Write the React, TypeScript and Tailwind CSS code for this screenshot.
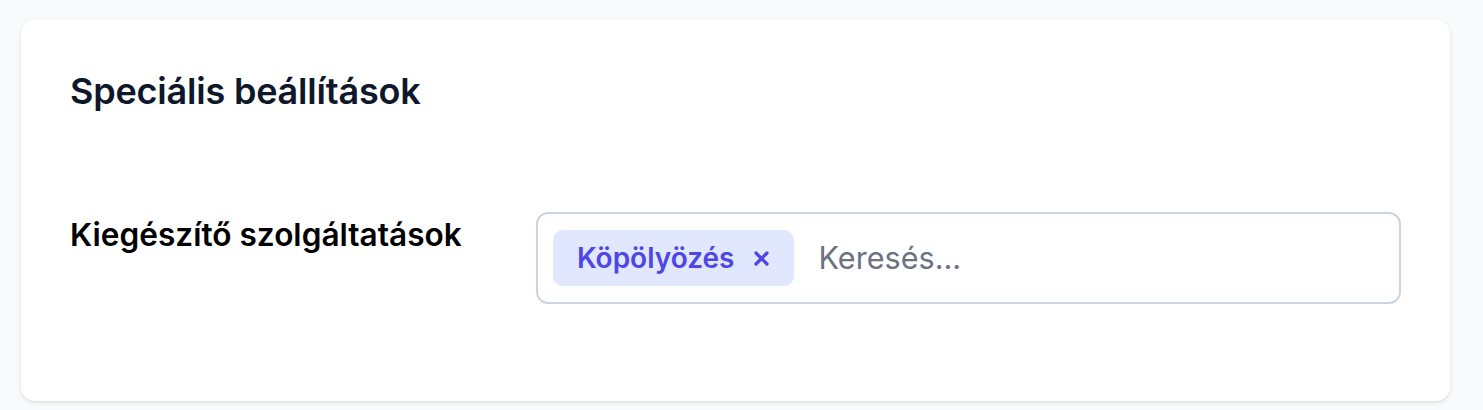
import React, { useState } from "react";

// Special settings card with a tag-style multi select
export default function App() {
  const [tags, setTags] = useState<string[]>(["Köpölyözés"]);
  const [query, setQuery] = useState("");

  return (
    <div
      className="min-h-screen bg-[#f8fafc] pt-[20px] pl-[21px]"
      style={{ fontFamily: "Inter, 'Noto Sans', sans-serif" }}
    >
      <div className="w-[1429px] rounded-[14px] bg-white px-[49px] pt-[49px] pb-[97px] shadow-[0_2px_5px_rgba(15,23,42,0.08),0_1px_2px_rgba(15,23,42,0.06)]">
        {/* Title */}
        <h2 className="text-[36px] leading-[44px] font-semibold tracking-[-0.2px] text-[#0f172a]">
          Speciális beállítások
        </h2>

        {/* Extra services row */}
        <div className="mt-[99px] flex items-start">
          <label className="mt-[3px] w-[466px] shrink-0 text-[31.6px] leading-[40px] font-semibold text-black">
            Kiegészítő szolgáltatások
          </label>

          <div className="flex w-[866px] items-center rounded-[12px] border-2 border-[#cbd5e1] px-[15px] py-[16px]">
            {tags.map((tag) => (
              <span
                key={tag}
                className="flex h-[56px] items-center rounded-[10px] bg-[#e0e7ff] pl-[24px] pr-[25px] text-[28px] font-semibold text-[#4f46e5]"
              >
                {tag}
                <button
                  type="button"
                  aria-label="Eltávolítás"
                  onClick={() => setTags(tags.filter((t) => t !== tag))}
                  className="ml-[19px] flex items-center"
                >
                  <svg width="15" height="15" viewBox="0 0 15 15">
                    <path
                      d="M2 2 L13 13 M13 2 L2 13"
                      stroke="#4f46e5"
                      strokeWidth="3.2"
                      strokeLinecap="round"
                    />
                  </svg>
                </button>
              </span>
            ))}
            <input
              type="text"
              value={query}
              onChange={(e) => setQuery(e.target.value)}
              placeholder="Keresés..."
              className="ml-[25px] min-w-0 flex-1 bg-transparent text-[30.6px] text-[#374151] outline-none placeholder:text-[#6b7280]"
            />
          </div>
        </div>
      </div>
    </div>
  );
}
